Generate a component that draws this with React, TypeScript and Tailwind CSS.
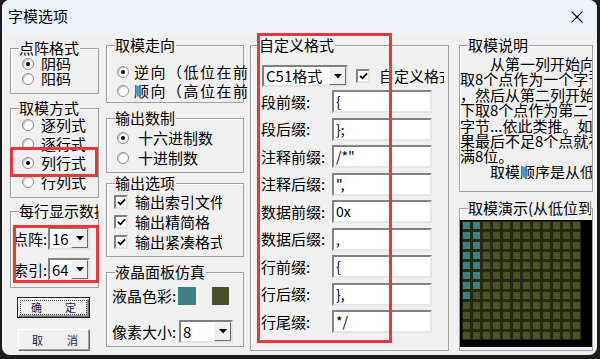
import type { ReactNode } from "react";

// 字模选项 dialog (classic Windows look)

function Group({ title, className = "", titleClass = "", children }: { title: string; className?: string; titleClass?: string; children?: ReactNode }) {
  return (
    <div className={`shrink-0 border border-[#a0a0a0] shadow-[inset_1px_1px_0_#ffffff] ${className}`}>
      <div className={`-mt-[10px] ml-[8px] w-fit overflow-hidden whitespace-nowrap bg-[#f0f0f0] pr-[1px] text-[15px] leading-[18px] ${titleClass}`}>
        {title}
      </div>
      {children}
    </div>
  );
}

function Radio({ label, checked = false, className = "", gap = "ml-[7px]" }: { label: string; checked?: boolean; className?: string; gap?: string }) {
  return (
    <div className={`flex items-center overflow-hidden whitespace-nowrap ${className}`}>
      <span className="flex h-[12px] w-[12px] shrink-0 items-center justify-center rounded-full border border-[#8f8f8f] bg-white shadow-[inset_1px_1px_1px_#c4c4c4]">
        {checked && <span className="h-[4px] w-[4px] rounded-full bg-black" />}
      </span>
      <span className={`text-[15px] leading-[18px] ${gap}`}>{label}</span>
    </div>
  );
}

function Check({ className = "" }: { className?: string }) {
  return (
    <span className={`flex h-[14px] w-[14px] shrink-0 items-center justify-center border-2 border-t-[#808080] border-l-[#808080] border-r-[#e3e3e3] border-b-[#e3e3e3] bg-white ${className}`}>
      <svg width="9" height="8" viewBox="0 0 9 8">
        <path d="M1 3.8 L3.5 6.3 L8 1.3" stroke="#000" strokeWidth="1.8" fill="none" />
      </svg>
    </span>
  );
}

function Combo({ value, className = "" }: { value: string; className?: string }) {
  return (
    <div className={`flex border-2 border-t-[#808080] border-l-[#808080] border-r-[#e3e3e3] border-b-[#e3e3e3] bg-white ${className}`}>
      <span className="flex flex-1 items-center overflow-hidden whitespace-nowrap pl-[2px] text-[15px] leading-[18px]">{value}</span>
      <span className="flex w-[17px] shrink-0 items-center justify-center border border-t-[#f8f8f8] border-l-[#f8f8f8] border-r-[#6a6a6a] border-b-[#6a6a6a] bg-[#f0f0f0]">
        <svg width="8" height="5" viewBox="0 0 8 5">
          <polygon points="0,0 8,0 4,4.5" fill="#000" />
        </svg>
      </span>
    </div>
  );
}

const fields = [
  ["段前缀:", "{"],
  ["段后缀:", "};"],
  ["注释前缀:", "/*\""],
  ["注释后缀:", "\","],
  ["数据前缀:", "0x"],
  ["数据后缀:", ","],
  ["行前缀:", "{"],
  ["行后缀:", "},"],
  ["行尾缀:", "*/"],
];

const desc = [
  "　　从第一列开始向下",
  "取8个点作为一个字节",
  "，然后从第二列开始向",
  "下取8个点作为第二个",
  "字节...依此类推。如",
  "果最后不足8个点就补",
  "满8位。",
  "　　取模顺序是从低到",
];

const cells = Array.from({ length: 144 }, (_, i) => {
  const r = Math.floor(i / 12);
  const c = i % 12;
  return (c === 0 && r < 8) || (c === 1 && r < 7);
});

export default function App() {
  return (
    <div className="relative h-[359px] w-[600px] overflow-hidden bg-[#1c1c1c] font-['Noto_Sans_CJK_SC',sans-serif] text-black">
      <div className="ml-[2px] flex h-[355px] w-[595px] flex-col overflow-hidden rounded-[8px] bg-[#f0f0f0]">
        {/* title bar */}
        <div className="flex h-[34px] shrink-0 items-center justify-between bg-[#eef2f9] pl-[6px] pr-[14px]">
          <span className="pb-[3px] text-[15px] leading-[18px]">字模选项</span>
          <svg width="12" height="12" viewBox="0 0 12 12">
            <path d="M0.5 0.5 L11.5 11.5 M11.5 0.5 L0.5 11.5" stroke="#000" strokeWidth="1.1" />
          </svg>
        </div>

        <div className="flex flex-1 pl-[8px]">
          {/* left column */}
          <div className="flex w-[89px] shrink-0 flex-col">
            <Group title="点阵格式" className="mt-[14px] h-[46px]">
              <div className="-mt-[1px]">
                <Radio label="阴码" checked className="ml-[11px] h-[15px]" />
                <Radio label="阳码" className="ml-[11px] h-[15px]" />
              </div>
            </Group>
            <Group title="取模方式" className="mt-[14px] h-[90px]">
              <div className="-mt-[2px]">
                <Radio label="逐列式" className="ml-[11px] h-[19px]" />
                <Radio label="逐行式" className="ml-[11px] h-[19px]" />
                <Radio label="列行式" checked className="ml-[11px] h-[19px]" />
                <Radio label="行列式" className="ml-[11px] h-[19px]" />
              </div>
            </Group>
            <Group title="每行显示数据" className="mt-[13px] h-[77px]" titleClass="max-w-[79px]">
              <div className="mt-[7px] flex h-[23px] items-center">
                <span className="ml-[2px] w-[35px] text-[15px] leading-[18px]">点阵:</span>
                <Combo value="16" className="h-[23px] w-[42px]" />
              </div>
              <div className="mt-[8px] flex h-[23px] items-center">
                <span className="ml-[2px] w-[35px] text-[15px] leading-[18px]">索引:</span>
                <Combo value="64" className="h-[23px] w-[42px]" />
              </div>
            </Group>
            <div className="ml-[7px] mt-[9px] flex h-[21px] w-[73px] border border-[#222] bg-[#f0f0f0] p-[1px] shadow-[inset_1px_1px_0_#ffffff,inset_-1px_-1px_0_#6a6a6a,inset_-2px_-2px_0_#a0a0a0]">
              <div className="m-[1px] flex flex-1 items-center justify-between border border-dotted border-[#333] px-[10px] text-[11px] leading-none text-[#1a1a40]">
                <span>确</span>
                <span>定</span>
              </div>
            </div>
            <div className="ml-[8px] mt-[11px] flex h-[22px] w-[72px] items-center justify-between border border-t-white border-l-white border-r-[#6a6a6a] border-b-[#6a6a6a] bg-[#f0f0f0] pl-[13px] pr-[11px] text-[11px] leading-none text-[#1a1a40] shadow-[inset_-1px_-1px_0_#a0a0a0]">
              <span>取</span>
              <span>消</span>
            </div>
          </div>

          {/* middle column */}
          <div className="ml-[7px] flex w-[138px] shrink-0 flex-col">
            <Group title="取模走向" className="mt-[11px] h-[58px]">
              <div className="mt-[8px]">
                <Radio label="逆向（低位在前）" checked gap="ml-[5px] tracking-[1.5px]" className="ml-[10px] h-[19px] w-[131px]" />
                <Radio label="顺向（高位在前）" gap="ml-[5px] tracking-[1.5px]" className="ml-[10px] h-[19px] w-[131px]" />
              </div>
            </Group>
            <Group title="输出数制" className="mt-[15px] h-[55px]">
              <div className="mt-[1px]">
                <Radio label="十六进制数" checked gap="ml-[9px]" className="ml-[10px] h-[20px]" />
                <Radio label="十进制数" gap="ml-[9px]" className="ml-[10px] h-[20px]" />
              </div>
            </Group>
            <Group title="输出选项" className="mt-[10px] h-[74px]">
              {["输出索引文件", "输出精简格", "输出紧凑格式"].map((t) => (
                <div key={t} className="ml-[7px] flex h-[20px] w-[108px] items-center overflow-hidden whitespace-nowrap">
                  <Check />
                  <span className="ml-[7px] text-[15px] leading-[18px]">{t}</span>
                </div>
              ))}
            </Group>
            <Group title="液晶面板仿真" className="mt-[15px] h-[75px]">
              <div className="mt-[6px] flex h-[18px] items-center">
                <span className="ml-[5px] w-[66px] whitespace-nowrap text-[15px] leading-[18px]">液晶色彩:</span>
                <span className="h-[18px] w-[18px] bg-[#3f8080]" />
                <span className="ml-[16px] h-[18px] w-[17px] bg-[#4a4f27]" />
              </div>
              <div className="mt-[15px] flex h-[23px] items-center">
                <span className="ml-[5px] w-[67px] whitespace-nowrap text-[15px] leading-[18px]">像素大小:</span>
                <Combo value="8" className="h-[23px] w-[54px]" />
              </div>
            </Group>
          </div>

          {/* custom format column */}
          <div className="ml-[6px] flex w-[199px] shrink-0 flex-col">
            <Group title="自定义格式" className="mt-[11px] h-[306px]">
              <div className="mt-[11px] flex h-[22px] w-[193px] items-center overflow-hidden whitespace-nowrap">
                <Combo value="C51格式" className="ml-[11px] h-[22px] w-[86px] shrink-0" />
                <Check className="ml-[8px]" />
                <span className="ml-[9px] text-[15px] leading-[18px]">自定义格式</span>
              </div>
              <div className="mt-[3px] flex flex-col gap-y-[4.5px]">
                {fields.map(([label, value]) => (
                  <div key={label} className="flex h-[23px] items-center">
                    <span className="ml-[10px] w-[71px] whitespace-nowrap text-[15px] leading-[18px]">{label}</span>
                    <span className="flex h-[23px] w-[100px] items-center border-2 border-t-[#828282] border-l-[#828282] border-r-[#e6e6e6] border-b-[#e6e6e6] bg-white pl-[2px] text-[14px] leading-[17px]">
                      {value}
                    </span>
                  </div>
                ))}
              </div>
            </Group>
          </div>

          {/* right column */}
          <div className="ml-[10px] flex w-[134px] shrink-0 flex-col">
            <Group title="取模说明" className="mt-[11px] h-[147px]">
              <div className="mt-[2px] overflow-hidden text-[15px] leading-[15.4px]">
                {desc.map((line, i) => (
                  <div key={i} className="whitespace-nowrap">
                    {line}
                  </div>
                ))}
              </div>
            </Group>
            <Group title="取模演示(从低位到高位)" className="mt-[16px] h-[143px]" titleClass="max-w-[123px]">
              <div className="mt-[3px] h-[127px] bg-black pl-[2px] pt-[1px]">
                <div className="grid w-fit grid-cols-[repeat(12,7px)] gap-[3px] bg-[#262912] p-[1px]">
                  {cells.map((on, i) => (
                    <span key={i} className={on ? "h-[7px] w-[7px] bg-[#3b8283]" : "h-[7px] w-[7px] bg-[#4b5027]"} />
                  ))}
                </div>
              </div>
            </Group>
          </div>
        </div>
      </div>

      {/* red annotation boxes */}
      <div className="pointer-events-none absolute left-[10px] top-[147px] h-[30px] w-[88px] border-[3px] border-[#e8383b]" />
      <div className="pointer-events-none absolute left-[13px] top-[225px] h-[58px] w-[86px] border-[3px] border-[#e8383b]" />
      <div className="pointer-events-none absolute left-[257px] top-[33px] h-[310px] w-[135px] border-[3px] border-[#e8383b]" />
    </div>
  );
}
